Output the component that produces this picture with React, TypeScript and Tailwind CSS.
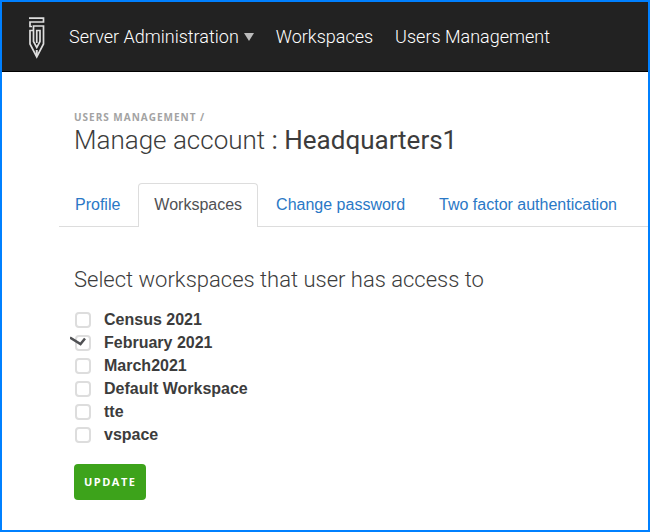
import { useState } from "react";

const workspaces = [
  "Census 2021",
  "February 2021",
  "March2021",
  "Default Workspace",
  "tte",
  "vspace",
];

const tabs = ["Profile", "Workspaces", "Change password", "Two factor authentication"];

function Logo() {
  return (
    <svg
      className="h-[42px] w-4 shrink-0"
      viewBox="0 0 16 42"
      fill="none"
      stroke="#dedede"
      strokeWidth="1.7"
      aria-label="Home"
      role="img"
    >
      <path d="M0 1.2H14.5V5H1V9.5H3" />
      <path d="M4.5 13.5H1V27L7.75 40L14.5 27V9H4.5V24.5L7.75 30.5L11 24.5V13.5H7.75V26" />
      <path d="M7.75 33V39" strokeWidth="2" />
    </svg>
  );
}

function Header() {
  return (
    <header className="flex h-[70px] items-center border-b border-black bg-[#222222] pl-[27px] font-['Roboto',sans-serif] text-lg text-white">
      <a href="#home" className="mr-6 pt-0.5">
        <Logo />
      </a>
      <nav className="flex items-center gap-[22px] whitespace-nowrap">
        <a href="#server" className="flex items-center gap-[5px] font-light">
          Server Administration
          <svg className="h-2 w-2.5" viewBox="0 0 10 8" fill="#bbbbbb" aria-hidden="true">
            <path d="M0 0H10L5 8Z" />
          </svg>
        </a>
        <a href="#workspaces" className="font-light">Workspaces</a>
        <a href="#users" className="font-light">Users Management</a>
      </nav>
    </header>
  );
}

function WorkspaceOption({ name, initial }: { name: string; initial: boolean }) {
  const [checked, setChecked] = useState(initial);
  return (
    <label className="relative flex h-[23px] items-center pl-px text-base font-bold">
      <input
        type="checkbox"
        checked={checked}
        onChange={() => setChecked(!checked)}
        className="mr-[13px] size-4 appearance-none rounded border-2 border-[#dddddd] bg-white"
      />
      {checked && (
        <svg
          className="pointer-events-none absolute -left-1 top-1 h-3 w-4"
          viewBox="0 0 16 12"
          fill="none"
          stroke="#505154"
          strokeWidth="2.5"
          aria-hidden="true"
        >
          <path d="M0 2.5L10.5 9L15 3.5" />
        </svg>
      )}
      {name}
    </label>
  );
}

export default function App() {
  return (
    <div className="min-h-screen border-2 border-[#0080ff] bg-white font-['Liberation_Sans',Arial,sans-serif] text-[#3c3c3c]">
      <Header />
      <main className="pl-[57px] pt-[38px]">
        <div className="pl-[15px]">
          <a
            href="#users"
            className="block font-['Open_Sans',sans-serif] text-[10px] font-bold leading-[14px] tracking-[1px] text-[#a3a3a3]"
          >
            USERS MANAGEMENT /
          </a>
          <h1 className="font-['Roboto',sans-serif] text-[26px] font-light leading-8">
            Manage account <span className="font-normal">: Headquarters1</span>
          </h1>
        </div>
        <nav className="mt-[27px] flex h-11 whitespace-nowrap border-b border-[#dddddd]">
          {tabs.map((tab) => (
            <a
              key={tab}
              href="#tab"
              className={
                tab === "Workspaces"
                  ? "mr-0.5 h-11 rounded-t border border-b-0 border-[#dddddd] bg-white px-[15px] text-base leading-[42px] text-[#505154]"
                  : "mr-0.5 h-11 px-4 text-base leading-[44px] text-[#2a78c6]"
              }
            >
              {tab}
            </a>
          ))}
        </nav>
        <form className="pl-[15px] pt-[39px]" onSubmit={(e) => e.preventDefault()}>
          <h2 className="font-['Roboto',sans-serif] text-[22px] font-light leading-7">
            Select workspaces that user has access to
          </h2>
          <div className="mt-3.5">
            {workspaces.map((name) => (
              <WorkspaceOption key={name} name={name} initial={name === "February 2021"} />
            ))}
          </div>
          <button
            type="submit"
            className="mt-[18px] h-9 rounded bg-[#3da31b] px-2.5 font-['Open_Sans',sans-serif] text-[11px] font-bold tracking-[1.5px] text-white"
          >
            UPDATE
          </button>
        </form>
      </main>
    </div>
  );
}
